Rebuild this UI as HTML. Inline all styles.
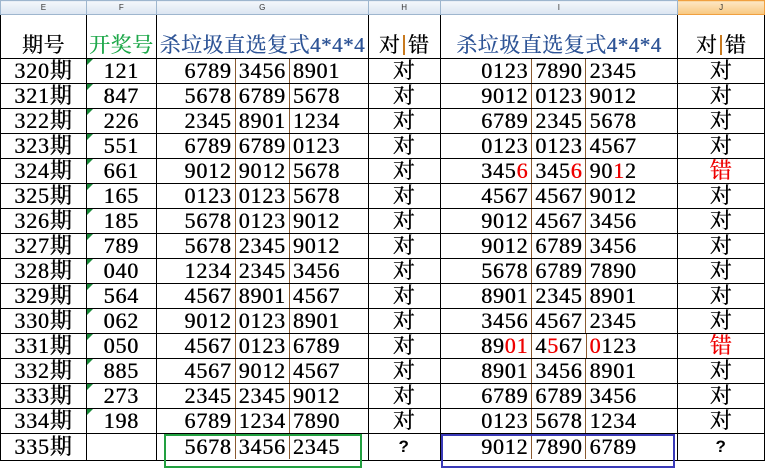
<!DOCTYPE html>
<html><head><meta charset="utf-8"><style>
body{margin:0;width:765px;height:460px;overflow:hidden;background:#fff;position:relative;font-family:"Liberation Serif","Noto Serif CJK SC",serif}
table{border-collapse:collapse;table-layout:fixed;position:absolute;left:0;top:0}
td{border:1px solid #000;padding:0;text-align:center;font-size:22px;line-height:24px;height:24px;white-space:nowrap;overflow:hidden;position:relative;color:#000;letter-spacing:0.8px;text-shadow:0.4px 0 0 currentColor}
tr.h td{height:13px;font-size:8px;line-height:13px;background:linear-gradient(#f4f7fb,#dbe5f1);border:1px solid #9eb6ce;color:#333;font-family:"Liberation Sans",sans-serif;text-shadow:none;letter-spacing:0}
tr.h td.j{background:linear-gradient(#fde7c4,#f8c880);border-color:#f0a040}
tr.t td{height:43px;vertical-align:bottom;font-size:21px;line-height:26px;letter-spacing:0.5px}
.s{display:inline-block;padding:0 3px}
.s+.s{border-left:1.5px solid #8a5a30}
.r{color:#e00}
.tri:before{content:"";position:absolute;left:0;top:0;border-top:6px solid #1a8a3a;border-right:6px solid transparent}
.bl{color:#2f5597}
.q{font-family:"Liberation Sans",sans-serif;font-weight:bold;font-size:17px;text-shadow:none}
.sep{display:inline-block;width:1.5px;height:20px;background:#c87a20;vertical-align:-3px;margin:0 3px}
</style></head><body>
<table>
<colgroup><col style="width:86px"><col style="width:70px"><col style="width:212px"><col style="width:72px"><col style="width:238px"><col style="width:87px"></colgroup>
<tr class="h"><td>E</td><td>F</td><td>G</td><td>H</td><td>I</td><td class="j">J</td></tr>
<tr class="t"><td>期号</td><td style="color:#1ea84a">开奖号</td><td class="bl">杀垃圾直选复式4*4*4</td><td>对<span class="sep"></span>错</td><td class="bl">杀垃圾直选复式4*4*4</td><td>对<span class="sep"></span>错</td></tr>
<tr><td>320期</td><td class="tri">121</td><td><span class="s">6789</span><span class="s">3456</span><span class="s">8901</span></td><td>对</td><td><span class="s">0123</span><span class="s">7890</span><span class="s">2345</span></td><td>对</td></tr>
<tr><td>321期</td><td class="tri">847</td><td><span class="s">5678</span><span class="s">6789</span><span class="s">5678</span></td><td>对</td><td><span class="s">9012</span><span class="s">0123</span><span class="s">9012</span></td><td>对</td></tr>
<tr><td>322期</td><td class="tri">226</td><td><span class="s">2345</span><span class="s">8901</span><span class="s">1234</span></td><td>对</td><td><span class="s">6789</span><span class="s">2345</span><span class="s">5678</span></td><td>对</td></tr>
<tr><td>323期</td><td class="tri">551</td><td><span class="s">6789</span><span class="s">6789</span><span class="s">0123</span></td><td>对</td><td><span class="s">0123</span><span class="s">0123</span><span class="s">4567</span></td><td>对</td></tr>
<tr><td>324期</td><td class="tri">661</td><td><span class="s">9012</span><span class="s">9012</span><span class="s">5678</span></td><td>对</td><td><span class="s">345<span class="r">6</span></span><span class="s">345<span class="r">6</span></span><span class="s">90<span class="r">1</span>2</span></td><td class="r">错</td></tr>
<tr><td>325期</td><td class="tri">165</td><td><span class="s">0123</span><span class="s">0123</span><span class="s">5678</span></td><td>对</td><td><span class="s">4567</span><span class="s">4567</span><span class="s">9012</span></td><td>对</td></tr>
<tr><td>326期</td><td class="tri">185</td><td><span class="s">5678</span><span class="s">0123</span><span class="s">9012</span></td><td>对</td><td><span class="s">9012</span><span class="s">4567</span><span class="s">3456</span></td><td>对</td></tr>
<tr><td>327期</td><td class="tri">789</td><td><span class="s">5678</span><span class="s">2345</span><span class="s">9012</span></td><td>对</td><td><span class="s">9012</span><span class="s">6789</span><span class="s">3456</span></td><td>对</td></tr>
<tr><td>328期</td><td class="tri">040</td><td><span class="s">1234</span><span class="s">2345</span><span class="s">3456</span></td><td>对</td><td><span class="s">5678</span><span class="s">6789</span><span class="s">7890</span></td><td>对</td></tr>
<tr><td>329期</td><td class="tri">564</td><td><span class="s">4567</span><span class="s">8901</span><span class="s">4567</span></td><td>对</td><td><span class="s">8901</span><span class="s">2345</span><span class="s">8901</span></td><td>对</td></tr>
<tr><td>330期</td><td class="tri">062</td><td><span class="s">9012</span><span class="s">0123</span><span class="s">8901</span></td><td>对</td><td><span class="s">3456</span><span class="s">4567</span><span class="s">2345</span></td><td>对</td></tr>
<tr><td>331期</td><td class="tri">050</td><td><span class="s">4567</span><span class="s">0123</span><span class="s">6789</span></td><td>对</td><td><span class="s">89<span class="r">01</span></span><span class="s">4<span class="r">5</span>67</span><span class="s"><span class="r">0</span>123</span></td><td class="r">错</td></tr>
<tr><td>332期</td><td class="tri">885</td><td><span class="s">4567</span><span class="s">9012</span><span class="s">4567</span></td><td>对</td><td><span class="s">8901</span><span class="s">3456</span><span class="s">8901</span></td><td>对</td></tr>
<tr><td>333期</td><td class="tri">273</td><td><span class="s">2345</span><span class="s">2345</span><span class="s">9012</span></td><td>对</td><td><span class="s">6789</span><span class="s">6789</span><span class="s">3456</span></td><td>对</td></tr>
<tr><td>334期</td><td class="tri">198</td><td><span class="s">6789</span><span class="s">1234</span><span class="s">7890</span></td><td>对</td><td><span class="s">0123</span><span class="s">5678</span><span class="s">1234</span></td><td>对</td></tr>
<tr><td style="height:26px">335期</td><td></td><td><span class="s">5678</span><span class="s">3456</span><span class="s">2345</span></td><td class="q">?</td><td><span class="s">9012</span><span class="s">7890</span><span class="s">6789</span></td><td class="q">?</td></tr>
</table>
<div style="position:absolute;left:164px;top:434px;width:194px;height:30px;border:2px solid #22a040"></div>
<div style="position:absolute;left:441px;top:434px;width:230px;height:30px;border:2px solid #3a3ab8"></div>
</body></html>
